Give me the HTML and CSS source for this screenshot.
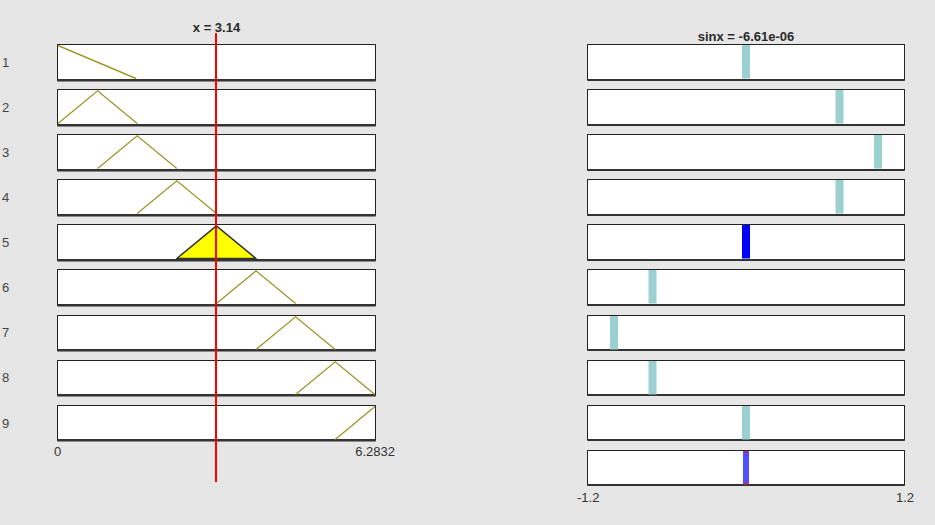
FILE: index.html
```html
<!DOCTYPE html>
<html lang="en">
<head>
  <meta charset="UTF-8">
  <meta name="viewport" content="width=device-width, initial-scale=1.0">
  <title>Rule Viewer</title>
  <link rel="stylesheet" href="styles.css">
</head>
<body>
  <div class="viewer">
    <!-- Entrada: funciones de pertenencia de x -->
    <section class="panel inputs">
      <div class="title">x = 3.14</div>
      <div class="rules">
        <span class="rule-no">1</span>
        <div class="box mf"><svg viewBox="0 0 317 33" preserveAspectRatio="none"><polyline points="0,0.5 78,33" /></svg></div>
        <span class="rule-no">2</span>
        <div class="box mf"><svg viewBox="0 0 317 33" preserveAspectRatio="none"><polyline points="0,33 39.6,0.8 79.2,33" /></svg></div>
        <span class="rule-no">3</span>
        <div class="box mf"><svg viewBox="0 0 317 33" preserveAspectRatio="none"><polyline points="39.6,33 79.2,0.8 118.8,33" /></svg></div>
        <span class="rule-no">4</span>
        <div class="box mf"><svg viewBox="0 0 317 33" preserveAspectRatio="none"><polyline points="79.2,33 118.8,0.8 158.4,33" /></svg></div>
        <span class="rule-no">5</span>
        <div class="box mf"><svg viewBox="0 0 317 33" preserveAspectRatio="none"><polygon class="fired" points="118.8,33 158.4,0.8 198,33" /></svg></div>
        <span class="rule-no">6</span>
        <div class="box mf"><svg viewBox="0 0 317 33" preserveAspectRatio="none"><polyline points="158.4,33 198,0.8 237.6,33" /></svg></div>
        <span class="rule-no">7</span>
        <div class="box mf"><svg viewBox="0 0 317 33" preserveAspectRatio="none"><polyline points="198,33 237.6,0.8 277.2,33" /></svg></div>
        <span class="rule-no">8</span>
        <div class="box mf"><svg viewBox="0 0 317 33" preserveAspectRatio="none"><polyline points="237.6,33 277.2,0.8 316.8,33" /></svg></div>
        <span class="rule-no">9</span>
        <div class="box mf"><svg viewBox="0 0 317 33" preserveAspectRatio="none"><polyline points="277.2,33 317,0.5" /></svg></div>
      </div>
      <div class="ticks ticks-in"><span>0</span><span>6.2832</span></div>
      <div class="cursor"></div>
    </section>

    <!-- Salida: sinx por regla -->
    <section class="panel output">
      <div class="title">sinx = -6.61e-06</div>
      <div class="outs">
        <div class="box"><svg viewBox="0 0 316 33" preserveAspectRatio="none"><rect class="bar" x="154" y="0" width="8" height="33" /></svg></div>
        <div class="box"><svg viewBox="0 0 316 33" preserveAspectRatio="none"><rect class="bar" x="247.5" y="0" width="8" height="33" /></svg></div>
        <div class="box"><svg viewBox="0 0 316 33" preserveAspectRatio="none"><rect class="bar" x="286" y="0" width="8" height="33" /></svg></div>
        <div class="box"><svg viewBox="0 0 316 33" preserveAspectRatio="none"><rect class="bar" x="247.5" y="0" width="8" height="33" /></svg></div>
        <div class="box"><svg viewBox="0 0 316 33" preserveAspectRatio="none"><rect class="bar active" x="154" y="0" width="8" height="33" /></svg></div>
        <div class="box"><svg viewBox="0 0 316 33" preserveAspectRatio="none"><rect class="bar" x="60.5" y="0" width="8" height="33" /></svg></div>
        <div class="box"><svg viewBox="0 0 316 33" preserveAspectRatio="none"><rect class="bar" x="22" y="0" width="8" height="33" /></svg></div>
        <div class="box"><svg viewBox="0 0 316 33" preserveAspectRatio="none"><rect class="bar" x="60.5" y="0" width="8" height="33" /></svg></div>
        <div class="box"><svg viewBox="0 0 316 33" preserveAspectRatio="none"><rect class="bar" x="154" y="0" width="8" height="33" /></svg></div>
        <div class="box"><svg viewBox="0 0 316 33" preserveAspectRatio="none">
          <rect class="result" x="155" y="0" width="6" height="33" />
          <circle class="dot" cx="158" cy="0.8" r="1.4" />
          <circle class="dot" cx="158" cy="32.2" r="1.4" />
        </svg></div>
      </div>
      <div class="ticks ticks-out"><span>-1.2</span><span>1.2</span></div>
    </section>
  </div>
</body>
</html>
```

FILE: styles.css
```css
html, body {
  margin: 0;
  height: 100%;
}
body {
  background-color: #e6e6e6;
  font-family: 'Liberation Sans', Arial, sans-serif;
  font-size: 13px;
  color: #333;
  overflow: hidden;
}
.viewer {
  display: flex;
  align-items: flex-start;
}
.panel {
  position: relative;
}
.inputs {
  width: 376px;
  padding-top: 20px;
}
.output {
  width: 318px;
  margin-left: 211px;
  padding-top: 29px;
}
.title {
  height: 15px;
  line-height: 15px;
  font-weight: bold;
  text-align: center;
  color: #2a2a2a;
}
.inputs .title {
  margin-left: 57px;
  margin-bottom: 9px;
}
/* filas de reglas: numero + caja */
.rules {
  display: grid;
  grid-template-columns: 57px 319px;
  grid-auto-rows: 36.5px;
  row-gap: 8.6px;
}
.rule-no {
  align-self: center;
  padding-left: 2px;
  color: #444;
}
.outs {
  display: flex;
  flex-direction: column;
  gap: 8.6px;
}
.box {
  height: 36.5px;
  box-sizing: border-box;
  background-color: #fff;
  border: 1px solid #222;
  border-bottom: 2px solid #333;
  border-radius: 1px;
}
.mf {
  box-shadow: 0 1px 0 #8a8a8a;
}
.box svg {
  display: block;
  width: 100%;
  height: 100%;
  overflow: visible;
}
polyline {
  fill: none;
  stroke: #9a9a2e;
  stroke-width: 1.4;
}
.fired {
  fill: #ffff00;
  stroke: #333;
  stroke-width: 1.5;
  stroke-linejoin: round;
}
.bar {
  fill: #9ccfcf;
}
.bar.active {
  fill: #0000ff;
}
.result {
  fill: #4f4fff;
}
.dot {
  fill: #e02020;
}
/* etiquetas de eje */
.ticks {
  display: flex;
  justify-content: space-between;
  line-height: 15px;
}
.ticks-in {
  margin-left: 54px;
  width: 341px;
  margin-top: 3px;
}
.ticks-out {
  margin-left: -10px;
  width: 337px;
  margin-top: 4px;
}
/* linea roja del valor de entrada */
.cursor {
  position: absolute;
  left: 215px;
  top: 33px;
  width: 2px;
  height: 449px;
  background-color: #ff0000;
}
```
